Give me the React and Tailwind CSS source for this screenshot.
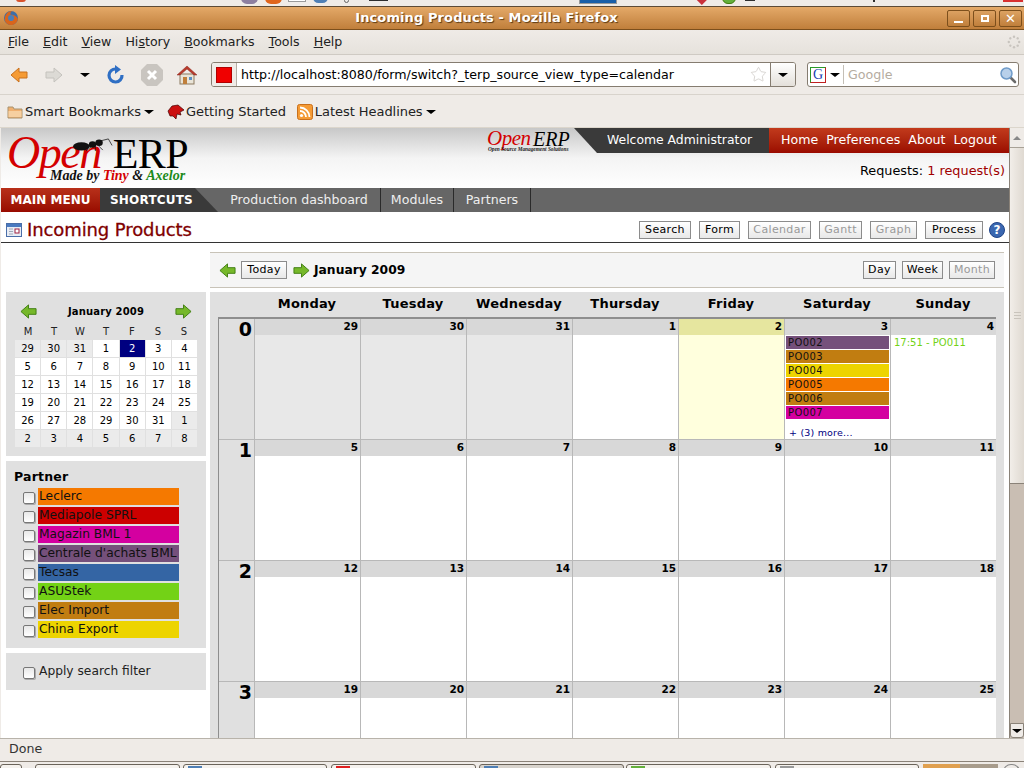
import { Star } from 'lucide-react';

const sans = 'font-["DejaVu_Sans",sans-serif]';

function Arrow({ dir = 'left', gray, orange, size = 18 }) {
  const fill = gray ? '#dcdad5' : orange ? '#f59b35' : '#76b82a';
  const stroke = gray ? '#c4c2bd' : orange ? '#c9701c' : '#3f7d10';
  return (
    <svg width={size} height={size} viewBox="0 0 18 18" className="shrink-0">
      <path d={dir === 'left' ? 'M1 9 L9 2 V6 H17 V12 H9 V16 Z' : 'M17 9 L9 2 V6 H1 V12 H9 V16 Z'} fill={fill} stroke={stroke} strokeWidth="1" strokeLinejoin="round" />
    </svg>
  );
}

function Caret({ className = '' }) {
  return <span className={`inline-block w-0 h-0 border-l-[5px] border-r-[5px] border-t-[4px] border-l-transparent border-r-transparent border-t-black ${className}`} />;
}

function Firefox() {
  return (
    <svg width="16" height="16" viewBox="0 0 16 16">
      <circle cx="8" cy="8" r="7" fill="#3c6ea8" />
      <path d="M2 11 C1 6 4 1 9 1 C7 3 7 4 8 5 C11 4 14 7 15 9 C14 13 11 15 8 15 C5 15 3 13 2 11Z" fill="#d9651c" />
      <circle cx="8" cy="8" r="3" fill="#4d7fb8" />
    </svg>
  );
}

function WinButton({ children }) {
  return <div className="w-[23px] h-[17px] border border-[#7c4f1c] rounded-[2px] bg-gradient-to-b from-[#dca262] to-[#c07f3b] flex items-center justify-center">{children}</div>;
}

function Menu({ u, rest, pre = '' }) {
  return <span>{pre}<span className="underline">{u}</span>{rest}</span>;
}

function Ant({ width, height }) {
  return (
    <svg width={width} height={height} viewBox="0 0 44 14">
      <ellipse cx="9" cy="9" rx="9" ry="4.5" fill="#111" />
      <ellipse cx="21" cy="7" rx="4" ry="3.5" fill="#111" />
      <ellipse cx="28" cy="5" rx="4" ry="3.5" fill="#111" />
      <path d="M30 3 L38 1 L42 8 M20 9 L14 14 M24 9 L24 14 M27 8 L32 13" stroke="#111" strokeWidth="0.8" fill="none" />
    </svg>
  );
}

function PageButton({ children, disabled, w }) {
  return (
    <span className={`${w} h-[18px] pt-px flex items-center justify-center border border-[#8c8c8c] bg-gradient-to-b from-white to-[#e8e8e8] text-[11px] tracking-[0.35px] ${disabled ? 'text-[#999]' : 'text-black'}`}>
      {children}
    </span>
  );
}

function FirefoxChrome() {
  return (
    <>
      {/* clipped panel icons */}
      <div className="h-[6px] bg-[#efebe7] flex shrink-0 overflow-hidden relative">
        <div className="absolute left-[16px] -top-[4px] w-[10px] h-[6px] rounded-full bg-[#d9532c]" />
        <div className="absolute left-[241px] -top-[8px] w-[17px] h-[12px] rounded-full bg-[#8d7fa0]" />
        <div className="absolute left-[265px] -top-[8px] w-[17px] h-[12px] rounded-full bg-[#e0651c]" />
        <div className="absolute left-[288px] -top-[4px] w-[18px] h-[6px] bg-white border border-[#999]" />
        <div className="absolute left-[313px] -top-[8px] w-[15px] h-[11px] rounded-full bg-[#4f7fb5]" />
        <div className="absolute left-[344px] -top-[2px] w-[5px] h-[5px] rounded-full border border-[#666]" />
        <div className="absolute left-[369px] -top-[4px] w-[19px] h-[5px] bg-[#2e2e2e]" />
        <div className="absolute left-[579px] -top-[1px] w-[38px] h-[5px] bg-[#1a5fa8] border border-[#999]" />
        <div className="absolute left-[697px] -top-[5px] w-[9px] h-[8px] rotate-45 bg-[#c9303a]" />
        <div className="absolute left-[722px] -top-[8px] w-[14px] h-[12px] rounded-full bg-[#64b03c] border border-[#3f7d10]" />
        <div className="absolute left-[745px] -top-[3px] w-[10px] h-[4px] bg-[#2e2e2e]" />
        <div className="absolute left-[873px] top-0 w-[2px] h-[2px] bg-[#2e2e2e]" />
        <div className="absolute left-[1003px] -top-[4px] w-[20px] h-[6px] bg-[#d83030]" />
      </div>
      <div className="h-px bg-[#5c4a36] shrink-0" />
      {/* title bar */}
      <div className="h-[23px] shrink-0 bg-gradient-to-b from-[#e4a968] to-[#c07f3b] border-b border-[#7c4f1c] flex items-center pl-[3px] pr-[2px] relative">
        <Firefox />
        <div className="flex-1 text-center pl-[7px] text-white font-bold text-[13px] tracking-[0.1px] [text-shadow:1px_1px_1px_#5c3a14]">Incoming Products - Mozilla Firefox</div>
        <div className="flex gap-[3px]">
          <WinButton><span className="w-[9px] h-[2px] bg-white mt-[7px]" /></WinButton>
          <WinButton><span className="w-[8px] h-[7px] border-2 border-white" /></WinButton>
          <WinButton><span className="text-white font-bold text-[13px] leading-none">✕</span></WinButton>
        </div>
      </div>
      {/* menu bar */}
      <div className="h-[25px] shrink-0 bg-gradient-to-b from-[#efebe7] to-[#e6e2dc] border-b border-[#cfcac3] flex items-center pl-[8px] gap-[14px] text-[12.6px] text-[#222] relative">
        <Menu u="F" rest="ile" />
        <Menu u="E" rest="dit" />
        <Menu u="V" rest="iew" />
        <Menu pre="Hi" u="s" rest="tory" />
        <Menu u="B" rest="ookmarks" />
        <Menu u="T" rest="ools" />
        <Menu u="H" rest="elp" />
        <svg width="14" height="14" viewBox="0 0 14 14" className="ml-auto mr-[3px]">
          {[0, 45, 90, 135, 180, 225, 270, 315].map((a) => (
            <circle key={a} cx="7" cy="1.8" r="1.2" fill="#c8c4be" transform={`rotate(${a} 7 7)`} />
          ))}
        </svg>
      </div>
      {/* navigation bar */}
      <div className="h-[40px] shrink-0 bg-[#efebe7] border-b border-[#d8d3cc] flex items-center relative">
        <div className="ml-[10px]"><Arrow orange /></div>
        <div className="ml-[17px]"><Arrow dir="right" gray /></div>
        <Caret className="ml-[17px]" />
        <svg width="20" height="20" viewBox="0 0 20 20" className="ml-[16px]">
          <path d="M16 10 A6.5 6.5 0 1 1 10 4" fill="none" stroke="#2f6fc4" strokeWidth="3.2" />
          <path d="M9 0 L15 4.5 L9 9 Z" fill="#2f6fc4" />
        </svg>
        <svg width="24" height="24" viewBox="0 0 24 24" className="ml-[14px]">
          <path d="M7 1 H17 L23 7 V17 L17 23 H7 L1 17 V7 Z" fill="#c9c5c0" />
          <path d="M8 8 L16 16 M16 8 L8 16" stroke="#fff" strokeWidth="3" />
        </svg>
        <svg width="22" height="22" viewBox="0 0 22 22" className="ml-[12px]">
          <rect x="4" y="10" width="14" height="10" fill="#e9e4d8" stroke="#8c7a60" />
          <path d="M1 11 L11 2 L21 11 L18 11 L11 5 L4 11 Z" fill="#b83a2c" stroke="#8a2a20" strokeWidth="0.5" />
          <rect x="7" y="13" width="4" height="7" fill="#c07f3b" />
          <rect x="13" y="13" width="3" height="3" fill="#5a8fc4" />
        </svg>
        {/* url box */}
        <div className="ml-[13px] w-[585px] h-[25px] bg-white border border-[#857c70] rounded-[3px] flex items-center overflow-hidden">
          <div className="w-[25px] h-full bg-[#efebe7] border-r border-[#b5afa6] flex items-center justify-center shrink-0">
            <span className="w-[16px] h-[16px] bg-[#f00000] border border-[#b00000]" />
          </div>
          <span className="ml-[4px] pt-[1px] text-[12.65px] text-black flex-1">http://localhost:8080/form/switch?_terp_source_view_type=calendar</span>
          <Star size={17} strokeWidth={1} className="text-[#c9c5c0] mr-[3px] shrink-0" />
          <div className="w-[25px] h-full border-l border-[#857c70] bg-gradient-to-b from-white to-[#e4e0da] flex items-center justify-center shrink-0"><Caret /></div>
        </div>
        {/* search box */}
        <div className="ml-[11px] w-[212px] h-[25px] bg-white border border-[#857c70] rounded-[3px] flex items-center">
          <span className="ml-[2px] w-[16px] h-[16px] border border-t-[#2a9a2a] border-l-[#2a9a2a] border-r-[#c02020] border-b-[#c02020] flex items-center justify-center text-[#2040b0] text-[14px] leading-none font-['Liberation_Serif',serif] shrink-0">G</span>
          <Caret className="ml-[4px]" />
          <div className="ml-[3px] w-px h-[19px] bg-[#c4bfb6]" />
          <span className="ml-[4px] pt-[2px] text-[12.65px] text-[#b5aca0] flex-1">Google</span>
          <svg width="18" height="18" viewBox="0 0 18 18" className="mr-[1px]">
            <path d="M11 11 L16 16" stroke="#6b6b6b" strokeWidth="2.6" strokeLinecap="round" />
            <circle cx="7.5" cy="7.5" r="5.5" fill="#b8d0ea" stroke="#6f9bc9" strokeWidth="1.5" />
          </svg>
        </div>
      </div>
      {/* bookmarks bar */}
      <div className="h-[33px] shrink-0 bg-[#efebe7] border-b border-[#dcd6cc] flex items-center text-[13px] text-[#222] pl-[7px] pt-[1px]">
        <svg width="16" height="14" viewBox="0 0 16 14"><path d="M1 2 H6 L7 4 H15 V13 H1 Z" fill="#f0b070" stroke="#a8926e" /><rect x="1.5" y="6" width="13" height="6" fill="#f6cfa0" /></svg>
        <span className="ml-[2px]">Smart Bookmarks</span>
        <Caret className="ml-[3px]" />
        <svg width="18" height="16" viewBox="0 0 18 16" className="ml-[13px]"><path d="M1 7 L5 2 L11 1 L17 6 L13 8 L14 11 L10 10 L9 15 L6 12 L3 12 Z" fill="#cc1010" stroke="#400" strokeWidth="0.7" /></svg>
        <span className="ml-[1px] tracking-[-0.05px]">Getting Started</span>
        <svg width="16" height="16" viewBox="0 0 16 16" className="ml-[11px]">
          <rect x="0.5" y="0.5" width="15" height="15" rx="2" fill="#f59b35" stroke="#c9701c" />
          <circle cx="4.5" cy="11.5" r="1.6" fill="#fff" />
          <path d="M3 7 A6 6 0 0 1 9 13 M3 3.5 A9.5 9.5 0 0 1 12.5 13" stroke="#fff" strokeWidth="1.8" fill="none" />
        </svg>
        <span className="ml-[2px] tracking-[-0.05px]">Latest Headlines</span>
        <Caret className="ml-[3px]" />
      </div>
    </>
  );
}

function Logo() {
  return (
    <div className="w-[200px] relative pl-[6px]">
      <div className="font-['Liberation_Serif',serif] leading-none flex items-baseline h-[40px] pt-[2px]">
        <span className="italic text-[46px] text-[#d40000] tracking-[-1.5px]">Open</span>
        <span className="text-[42px] text-black ml-[12px] tracking-[-0.5px]">ERP</span>
      </div>
      <div className="absolute left-[72px] top-[10px]"><Ant width="41" height="13" /></div>
      <div className="font-['Liberation_Serif',serif] italic font-bold text-[14px] leading-none pl-[43px] mt-[1px] text-[#111]">
        Made by <span className="text-[#d40000]">Tiny</span> &amp; <span className="text-[#1a8a1a]">Axelor</span>
      </div>
    </div>
  );
}

function PageHeader() {
  return (
    <>
      <div className="h-[60px] shrink-0 flex bg-gradient-to-b from-[#c8c8c8] via-[#f4f4f4] to-white">
        <Logo />
        <div className="flex-1" />
        <div className="flex flex-col items-end">
          <div className="flex h-[25px]">
            <div className="relative w-[87px] h-[25px] font-['Liberation_Serif',serif] leading-none">
              <span className="absolute left-0 top-0 italic text-[#d40000] text-[21px] tracking-[-0.5px]">Open</span>
              <span className="absolute left-[46px] top-[1px] text-black text-[20px] italic">ERP</span>
              <span className="absolute left-[1px] top-[19px] text-[5.3px] font-bold italic whitespace-nowrap text-[#222]">Open Source Management Solutions</span>
            </div>
            <div className="w-[23px] h-[25px] bg-[#3a3a3a] [clip-path:polygon(0_0,100%_100%,100%_0)]" />
            <div className="w-[172px] bg-[#3a3a3a] text-white text-[12.4px] flex items-center pl-[10px]">Welcome Administrator</div>
            <div className="w-[240px] bg-gradient-to-b from-[#c23a1c] to-[#9a0a00] text-white text-[12.6px] flex items-center pl-[12px] gap-[8px]">
              <span>Home</span><span>Preferences</span><span>About</span><span>Logout</span>
            </div>
          </div>
          <div className="text-[12.85px] mt-[8px] mr-[4px] text-black">Requests: <span className="text-[#a00000]">1 request(s)</span></div>
        </div>
      </div>
      {/* menu strip */}
      <div className="h-[24px] shrink-0 bg-[#666] flex items-stretch text-[12.6px] text-white">
        <div className="w-[99px] bg-gradient-to-b from-[#b8301a] to-[#980a00] font-bold text-[12px] flex items-center justify-center">MAIN MENU</div>
        <div className="w-[95px] bg-[#3a3a3a] font-bold text-[12px] tracking-[0.2px] flex items-center pl-[10px]">SHORTCUTS</div>
        <div className="w-[23px] bg-[#3a3a3a] [clip-path:polygon(0_0,100%_100%,0_100%)]" />
        <div className="w-[163px] flex items-center justify-center border-r border-[#2a2a2a] text-[#eee]">Production dashboard</div>
        <div className="w-[73px] flex items-center justify-center border-r border-[#2a2a2a] text-[#eee]">Modules</div>
        <div className="w-[77px] flex items-center justify-center border-r border-[#2a2a2a] text-[#eee]">Partners</div>
      </div>
      {/* title row */}
      <div className="h-[31px] shrink-0 border-b border-[#333] flex items-center pl-[5px] pr-[4px] pt-[6px]">
        <svg width="16" height="14" viewBox="0 0 16 14">
          <rect x="0.5" y="0.5" width="15" height="13" fill="#e8ecf4" stroke="#4a6ea8" />
          <rect x="1" y="1" width="14" height="3" fill="#4a7ac0" />
          <path d="M3 6 H7 M3 8.5 H7 M3 11 H7" stroke="#a0a8b8" />
          <rect x="9" y="6" width="4" height="4" fill="#fff" stroke="#a02040" />
        </svg>
        <span className="ml-[5px] text-[18px] text-[#800000] tracking-[-0.1px] [-webkit-text-stroke:0.3px_#800000] mt-[-1px]">Incoming Products</span>
        <div className="ml-auto flex items-center">
          <PageButton w="w-[52px]">Search</PageButton>
          <div className="w-[8px]" />
          <PageButton w="w-[41px]">Form</PageButton>
          <div className="w-[8px]" />
          <PageButton w="w-[63px]" disabled>Calendar</PageButton>
          <div className="w-[8px]" />
          <PageButton w="w-[43px]" disabled>Gantt</PageButton>
          <div className="w-[8px]" />
          <PageButton w="w-[47px]" disabled>Graph</PageButton>
          <div className="w-[8px]" />
          <PageButton w="w-[58px]">Process</PageButton>
          <span className="ml-[6px] w-[16px] h-[16px] rounded-full bg-[#3a67b0] border border-[#1f4488] text-white text-[12px] font-bold flex items-center justify-center leading-none">?</span>
        </div>
      </div>
    </>
  );
}

const miniDays = [
  [29, 30, 31, 1, 2, 3, 4],
  [5, 6, 7, 8, 9, 10, 11],
  [12, 13, 14, 15, 16, 17, 18],
  [19, 20, 21, 22, 23, 24, 25],
  [26, 27, 28, 29, 30, 31, 1],
  [2, 3, 4, 5, 6, 7, 8],
];

function MiniCalendar() {
  return (
    <div className="h-[164px] bg-[#e0e0e0] px-[9px] pt-[10px]">
      <div className="flex items-center justify-between px-[5px] h-[18px]">
        <Arrow size={17} />
        <span className="text-[10px] font-bold tracking-[0.15px]">January 2009</span>
        <Arrow dir="right" size={17} />
      </div>
      <div className="grid grid-cols-7 mt-[2px] h-[18px] items-center text-center text-[10px] text-[#222] w-[182px]">
        {['M', 'T', 'W', 'T', 'F', 'S', 'S'].map((d, i) => <span key={i}>{d}</span>)}
      </div>
      <div className="grid grid-cols-7 gap-[1px] w-[182px]">
        {miniDays.flat().map((d, i) => {
          const muted = i < 3 || i >= 34;
          const today = i === 4;
          return (
            <div key={i} className={`h-[17px] flex items-center justify-center text-[10px] ${today ? 'bg-[#000080] text-white' : muted ? 'bg-[#ebebeb] text-black' : 'bg-white text-black'}`}>{d}</div>
          );
        })}
      </div>
    </div>
  );
}

function Check() {
  return <span className="w-[12px] h-[12px] mt-[2px] shrink-0 rounded-[2px] border border-[#777] bg-gradient-to-b from-[#e8e8e8] to-white shadow-[1px_1px_0_#aaa]" />;
}

const partners = [
  ['Leclerc', 'bg-[#f57900]'],
  ['Mediapole SPRL', 'bg-[#cc0000]'],
  ['Magazin BML 1', 'bg-[#d400a0]'],
  ["Centrale d'achats BML", 'bg-[#75507b]'],
  ['Tecsas', 'bg-[#3465a4]'],
  ['ASUStek', 'bg-[#73d216]'],
  ['Elec Import', 'bg-[#c17d11]'],
  ['China Export', 'bg-[#edd400]'],
];

function Sidebar() {
  return (
    <div className="w-[200px] ml-[5px] shrink-0 flex flex-col gap-[5px] pt-[49px] text-[12.25px]">
      <MiniCalendar />
      <div className="h-[187px] bg-[#e0e0e0] pl-[8px] pt-[8px]">
        <div className="font-bold text-[12.5px] leading-[15px] tracking-[0.2px]">Partner</div>
        <div className="mt-[4px] flex flex-col gap-[2px] pl-[9px]">
          {partners.map(([name, color]) => (
            <div key={name} className="flex items-center gap-[3px]">
              <Check />
              <div className={`w-[141px] h-[17px] ${color} text-[#111] pl-[1px] leading-[17px] whitespace-nowrap overflow-hidden`}>{name}</div>
            </div>
          ))}
        </div>
      </div>
      <div className="h-[37px] bg-[#e0e0e0] pl-[17px] flex items-center gap-[4px] text-[#222]">
        <Check />
        <span>Apply search filter</span>
      </div>
    </div>
  );
}

const weekDays = ['Monday', 'Tuesday', 'Wednesday', 'Thursday', 'Friday', 'Saturday', 'Sunday'];
const weeks = [
  [29, 30, 31, 1, 2, 3, 4],
  [5, 6, 7, 8, 9, 10, 11],
  [12, 13, 14, 15, 16, 17, 18],
  [19, 20, 21, 22, 23, 24, 25],
];
const events = [
  ['PO002', 'bg-[#75507b]'],
  ['PO003', 'bg-[#c17d11]'],
  ['PO004', 'bg-[#edd400]'],
  ['PO005', 'bg-[#f57900]'],
  ['PO006', 'bg-[#c17d11]'],
  ['PO007', 'bg-[#d400a0]'],
];

function DayCell({ day, w, i }) {
  const prevMonth = w === 0 && i < 3;
  const today = w === 0 && i === 4;
  return (
    <div className={`border-l border-[#b8b8b8] flex flex-col ${prevMonth ? 'bg-[#e8e8e8]' : today ? 'bg-[#ffffdd]' : 'bg-white'}`}>
      <div className={`h-[16px] shrink-0 text-right pr-[2px] text-[10.5px] font-bold leading-[15px] ${today ? 'bg-[#e6e69f]' : 'bg-[#d8d8d8]'}`}>{day}</div>
      {w === 0 && i === 5 && (
        <div className="pl-[1px] pr-[1px] pt-[1px] flex flex-col gap-[1px] text-[10px] tracking-[0.4px]">
          {events.map(([name, color]) => (
            <div key={name} className={`h-[13px] ${color} leading-[13px] pl-[2px] text-[#111]`}>{name}</div>
          ))}
          <div className="text-[#000080] pl-[3px] mt-[6px] leading-[13px] text-[9.5px] tracking-[0.2px]">+ (3) more...</div>
        </div>
      )}
      {w === 0 && i === 6 && (
        <div className="pl-[3px] pt-[1px] text-[#73d216] text-[10px] leading-[14px]">17:51 - PO011</div>
      )}
    </div>
  );
}

function MainCalendar() {
  return (
    <div className="w-[794px] ml-[4px] shrink-0 pt-[9px]">
      <div className="h-[36px] bg-[#f5f5f5] border-t border-b border-[#c8c3b8] flex items-center pl-[9px] pr-[9px]">
        <Arrow size={17} />
        <span className="ml-[5px] w-[46px] h-[18px] pt-px border border-[#8c8c8c] bg-gradient-to-b from-white to-[#e8e8e8] text-[11px] tracking-[0.35px] flex items-center justify-center">Today</span>
        <span className="ml-[6px]"><Arrow dir="right" size={17} /></span>
        <span className="ml-[4px] text-[12.3px] font-bold">January 2009</span>
        <div className="ml-auto flex gap-[6px]">
          <PageButton w="w-[33px]">Day</PageButton>
          <PageButton w="w-[41px]">Week</PageButton>
          <PageButton w="w-[46px]" disabled>Month</PageButton>
        </div>
      </div>
      <div className="mt-[4px] bg-[#e0e0e0] h-[500px] pl-[8px] pr-[8px]">
        <div className="grid grid-cols-[36px_repeat(7,106px)] h-[25px] pb-[2px] items-center text-center text-[13px] font-bold tracking-[0.2px]">
          <span />
          {weekDays.map((d) => <span key={d}>{d}</span>)}
        </div>
        <div className="border-t-2 border-l border-[#8e8e8e] w-[778px]">
          {weeks.map((week, w) => (
            <div key={w} className={`grid grid-cols-[35px_repeat(7,106px)] ${w > 0 ? 'h-[121px] border-t border-[#b8b8b8]' : 'h-[120px]'}`}>
              <div className="text-[19px] font-bold leading-[20px] text-black bg-[#e0e0e0] pl-[19px] text-right pr-[2px]">{w}</div>
              {week.map((day, i) => <DayCell key={i} day={day} w={w} i={i} />)}
            </div>
          ))}
        </div>
      </div>
    </div>
  );
}

function Scrollbar() {
  return (
    <div className="w-[15px] shrink-0 bg-[#c9beb3] border-l border-[#8a8278] flex flex-col">
      <div className="h-[20px] shrink-0 bg-[#efebe7] border-b border-[#a8a196] flex items-center justify-center">
        <span className="w-0 h-0 border-l-[4px] border-r-[4px] border-b-[4px] border-l-transparent border-r-transparent border-b-[#888]" />
      </div>
      <div className="h-[336px] shrink-0 bg-gradient-to-r from-[#f2eee9] to-[#dfd9d1] border-b border-[#8a8278] flex flex-col items-center justify-center gap-[2px]">
        <span className="w-[7px] h-px bg-[#c9c4bc]" />
        <span className="w-[7px] h-px bg-[#c9c4bc]" />
        <span className="w-[7px] h-px bg-[#c9c4bc]" />
      </div>
      <div className="flex-1" />
      <div className="h-[15px] shrink-0 bg-[#efebe7] border border-[#8a8278] rounded-b-[3px] flex items-center justify-center">
        <Caret />
      </div>
    </div>
  );
}

function TaskButton({ className, active, icon }) {
  return (
    <div className={`h-[8px] border border-[#6b645a] rounded-t-[3px] ${active ? 'bg-[#d8d3cc]' : 'bg-[#f5f2ee]'} ${className}`}>
      {icon && <div className={`ml-[4px] mt-[1px] w-[14px] h-[3px] ${icon}`} />}
    </div>
  );
}

function Taskbar() {
  return (
    <div className="h-[7px] shrink-0 bg-[#efebe7] border-t border-[#8a8278] flex items-start overflow-hidden pt-[2px]">
      <TaskButton className="w-[22px] mr-[13px]" />
      <TaskButton className="w-[145px] mr-[3px]" />
      <TaskButton className="w-[144px] mr-[4px]" icon="bg-[#4f7fb5]" />
      <TaskButton className="w-[145px] mr-[3px]" icon="bg-[#e02020]" />
      <TaskButton className="w-[145px] mr-[2px]" active icon="bg-[#4f7fb5]" />
      <TaskButton className="w-[145px] mr-[4px]" icon="bg-[#64b03c]" />
      <TaskButton className="w-[144px] mr-[4px]" icon="bg-[#999]" />
      <div className="w-[37px] h-[6px] bg-[#e0a050]" />
      <div className="w-[38px] h-[6px] bg-[#a89c8c]" />
      <div className="ml-[5px] w-[17px] h-[8px] rounded-t-full border border-[#888]" />
    </div>
  );
}

export default function App() {
  return (
    <div className={`w-[1024px] h-[768px] overflow-hidden flex flex-col bg-[#efebe7] text-black ${sans}`}>
      <FirefoxChrome />
      <div className="h-[610px] shrink-0 flex pl-px overflow-hidden">
        <div className="w-[1008px] shrink-0 bg-white overflow-hidden flex flex-col">
          <PageHeader />
          <div className="flex items-start">
            <Sidebar />
            <MainCalendar />
          </div>
        </div>
        <Scrollbar />
      </div>
      <div className="h-[23px] shrink-0 bg-[#efebe7] border-t border-[#b8b3aa] flex items-center pl-[9px] pb-[2px] text-[12.6px] text-[#333]">Done</div>
      <Taskbar />
    </div>
  );
}
